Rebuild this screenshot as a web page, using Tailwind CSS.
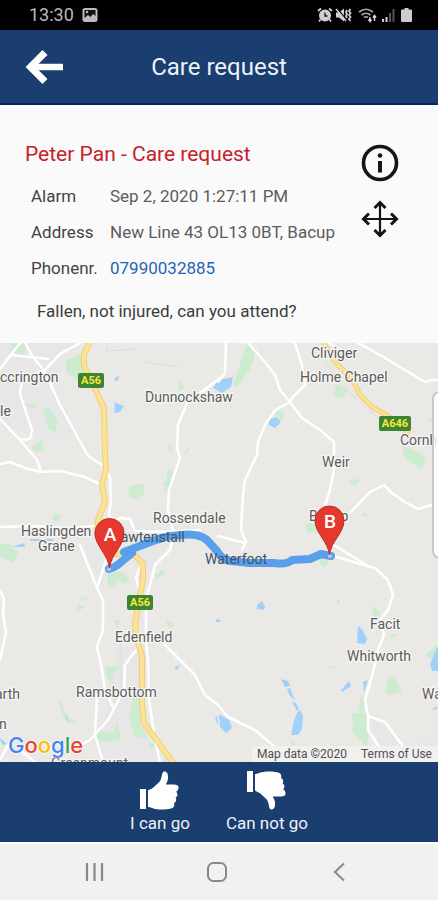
<!DOCTYPE html>
<html lang="en">
<head>
<meta charset="utf-8">
<meta name="viewport" content="width=device-width, initial-scale=1">
<title>Care request</title>
<script src="https://cdn.jsdelivr.net/npm/@tailwindcss/browser@4"></script>
</head>
<body class="flex min-h-screen flex-col bg-[#fafafa] font-['Roboto',sans-serif] text-[#444]">

<!-- Status bar -->
<div class="flex h-[30px] items-center justify-between bg-black pr-[26px] pl-[29px] text-[#b8b8b8]">
  <div class="flex items-center gap-2">
    <span class="text-lg leading-6">13:30</span>
    <svg class="size-4" viewBox="0 0 16 16"><rect x="0.5" y="1" width="15" height="14" rx="2.5" fill="#bbb"/><path d="M2.500 3h11v6l-2.500-2-2.500 3-2.500-2-3.500 3z" fill="#111"/><circle cx="5" cy="5" r="1.200" fill="#bbb"/></svg>
  </div>
  <div class="flex items-center gap-[2px]">
    <svg class="size-4" viewBox="0 0 16 16" fill="none" stroke="#d0d0d0"><circle cx="8" cy="8.500" r="5" fill="#d0d0d0" stroke-width="2"/><path d="M8 5.500v3.500h2.500" stroke="#111" stroke-width="1.300"/><path d="M1 4l3-2.500M15 4l-3-2.500M3.500 12.500l-1.500 2M12.500 12.500l1.500 2" stroke-width="1.800"/></svg>
    <svg class="h-4 w-[17px]" viewBox="0 0 17 16"><path d="M1 5.500h3l5-4v13l-5-4H1z" fill="#d0d0d0"/><path d="M2 1.500l10 12" stroke="#000" stroke-width="1.500"/><path d="M1 2l10 12" stroke="#d0d0d0" stroke-width="1.500"/><path d="M12 3l-1 2 1 2-1 2 1 2M15.500 2l-1.500 2 1.500 2-1.500 2 1.500 2-1.500 2 1.500 2" fill="none" stroke="#d0d0d0" stroke-width="1.800"/></svg>
    <svg class="ml-1 h-4 w-[19px]" viewBox="0 0 19 16" fill="none" stroke="#aaa" stroke-width="1.600"><path d="M1 5Q8 -.5 15 5M3.500 8Q8 4.500 12.500 8M6 10.500Q8 9 10 10.500"/><path d="M12 10v4M10.500 12.500l1.500 2 1.500-2M16.500 14v-5M15 10.500l1.500-2 1.500 2" stroke="#ddd" stroke-width="1.400"/></svg>
    <svg class="ml-[2px] h-4 w-[14px]" viewBox="0 0 14 16"><path d="M1 12h2v3H1zM4.500 10h2v5h-2z" fill="#ccc"/><path d="M8 6h2v9H8zM11.500 2h2v13h-2z" fill="#555"/></svg>
    <svg class="ml-1 h-4 w-[11px]" viewBox="0 0 11 16"><path d="M3.500 1h4v1.500H10a1 1 0 0 1 1 1V14a1 1 0 0 1-1 1H1a1 1 0 0 1-1-1V3.500a1 1 0 0 1 1-1h2.500z" fill="#ccc"/></svg>
  </div>
</div>

<!-- App header -->
<header class="grid h-[75px] grid-cols-[64px_1fr_64px] items-center border-b-2 border-[#08236b] bg-[#1a3e70] text-white">
  <button type="button" aria-label="Back" class="flex justify-end">
    <svg class="h-9 w-[39px]" viewBox="0 0 39 36" fill="none" stroke="#fff"><path d="M38 18H6" stroke-width="6.500"/><path d="M20 3.500L5.500 18 20 32.500" stroke-width="7"/></svg>
  </button>
  <h1 class="text-center text-2xl text-[#eef2f8]">Care request</h1>
</header>

<!-- Request details -->
<section class="flex justify-between pt-[35px] pb-5 pl-[25px]">
  <div>
    <h2 class="text-[21px] leading-7 text-[#c6202c]">Peter Pan - Care request</h2>
    <dl class="grid grid-cols-[79px_auto] pt-[10px] pl-[6px] text-[17px] leading-9 text-[#5c5c5c]">
      <dt class="text-[#444]">Alarm</dt><dd>Sep 2, 2020 1:27:11 PM</dd>
      <dt class="text-[#444]">Address</dt><dd>New Line 43 OL13 0BT, Bacup</dd>
      <dt class="text-[#444]">Phonenr.</dt><dd><a href="tel:07990032885" class="text-[#2465b5]">07990032885</a></dd>
    </dl>
    <p class="pt-[13px] pl-3 text-[17px] leading-6 text-[#3c3c3c]">Fallen, not injured, can you attend?</p>
  </div>
  <div class="flex flex-col gap-[18px] pt-1 pr-[39px]">
    <button type="button" aria-label="Information">
      <svg class="size-[38px]" viewBox="0 0 38 38"><circle cx="19" cy="19" r="16.500" fill="none" stroke="#151515" stroke-width="3.600"/><circle cx="19" cy="11.500" r="2.300" fill="#151515"/><rect x="17" y="17" width="4" height="11.500" fill="#151515"/></svg>
    </button>
    <button type="button" aria-label="Move">
      <svg class="size-[38px]" viewBox="0 0 38 38" fill="none" stroke="#151510" stroke-width="3"><path d="M19 2v34M2 19h34" stroke-width="2.200"/><path d="M13.500 8L19 2.500 24.500 8M13.500 30L19 35.500l5.500-5.500M8 13.500L2.500 19 8 24.500M30 13.500l5.500 5.500-5.500 5.500"/></svg>
    </button>
  </div>
</section>

<!-- Map -->
<main class="relative min-h-[419px] flex-1 overflow-hidden bg-[#eae9e5]">
  <svg class="absolute inset-0 size-full" viewBox="0 343 438 419" preserveAspectRatio="xMidYMid slice" font-family="Roboto, sans-serif" role="img" aria-label="Route from A to B">
    <rect y="343" width="438" height="419" fill="#eae9e5"/>
    <!-- towns -->
    <g fill="#e7e7e7">
      <path d="M0 343h78l-20 30 15 60-20 10-53-20zM98 510l34 5 5 25-5 20 12 30 8-20 20-30-10-18M78 530l25 60 6-30zM118 645l22 5v80l30 32h-60l-20-25 20-40zM370 715l35 30 33-10v27h-55z"/>
    </g>
    <!-- parks and woods -->
    <g fill="#ccebcf">
      <path d="M12 343h15l-3 12-14 1zM66 360l15-7 3 22-7 5-11-8zM24 403l15 3-8 3zM42 406l8 3 8 14-3 9-7-4-4-14zM34 444l9-4v9l-6 4-5-4zM168 445l5 4v4l-5-3zM180 380l5 9-7 2zM186 450l5-2-8 9zM168 470l5 2-3 18h-5zM136 485l8-1-1 6h-6zM130 486l14-2v10l-10 6-6-5z"/>
      <path d="M247 343l8 10-5 16-12 18-5-2 6-18zM336 384l12 5-6 9-8-3zM276 410l8 2-2 10-5-3zM402 445l18 8 6 8-5 8-16-10zM351 480l8 2-5 4-5-3zM425 417l13 4-4 4zM354 478l6 3-9 3z"/>
      <path d="M0 543l10 2 8 8-5 10-13-6zM53 513l8 3-2 6-6-2zM108 574l12-3 9 6-3 7-8-2-5 6-6-4zM80 598l12-2-10 5zM78 604l6 3-7 6zM306 523l10 1 3 8-12 1zM320 558l9 2-4 8-5-4zM363 512l6 3-6 2zM155 575l7-5 3 3-8 7zM372 605l8 8-6 6zM163 482h5l-2 12z"/>
      <path d="M114 620h6l-3 10zM105 667l14-1-6 8 1 12-7-8zM98 730l16 3 3-12 4 18-11 3-15-2zM134 690l8 15-2 20 9 14-14-3-6-18zM58 700l4 4 5 12 12 8-14-3zM148 741l8 4-6 5zM165 620l10 4-5 5zM388 676l7 1 7 14-13 4-3-3zM352 713l15 2 2 12-2 20-14-14zM388 635l11-1-8 4zM425 655l12-10v18zM290 740l6 3-3 4zM360 697l5 2-2 16h-4z"/>
    </g>
    <!-- water -->
    <g fill="#9fd1fb">
      <path d="M114 380l4-5 1 4-3 2zM114 402l10 4-4 6-6 1 1-6zM213 388l5-8 15-3-2 10-9 6zM268 420l8-3 5 5-6 6-6-3zM12 547l12-4 1 4zM30 539h23v2H30zM257 605l5-4 3 6-1 3-7-1zM337 602l2-2v3zM358 626l4 3 5 10-2 5-8-1zM341 690l8-9 2 5-9 6zM281 679l7 2 2 5-5 1zM287 689l3-1 5 12-5-4zM292 702l4 1 3 6-2 2zM300 710l3 6-1 13-4 6h-7l3-14 3-8zM219 714l10 6 3 8-6 5-6-6zM430 664l8-18v25h-6zM217 715l-2 5 3 5zM174 667l6-2-3 5zM66 715l4 9-4-6zM0 738l7 6-5 1zM363 682l5-2-4 12zM216 619l4 1v2h-4zM432 710l5-4v3z"/>
    </g>
    <!-- railway and minor roads -->
    <path d="M320 350l10 18 20 25 28 25M108 343l-2 8 30-2M145 362l34 5M121 640v50M328 667h10" fill="none" stroke="#dddddb" stroke-width="1"/>
    <!-- local roads -->
    <g fill="none" stroke="#fff" stroke-width="2.500" stroke-linejoin="round" stroke-linecap="round">
      <path d="M20 343L3 365l-3 4M25 343l8 14 12 15 15 33 28 51 16 10 6 12 1 22-2 15 8 10M80 343l-20 11-15 16-23 10-2 14 12 36-2 9-10 1-20-21M20 440l17 20 4 12M0 464l10-2 15 6 16 4 19-1 25 6 15 7M12 355l36 4"/>
      <path d="M220 378l-33 25-9 22-1 23 3 10-11 32-1 20 6 25-4 15-15 15-5 20-4 15v40l2 20 1 40 6 40 5 22M226 343l-1 30-7 9M248 343l17 19 10 13 5 15 10 12 12 16 18 12 14 12v28l-4 20-5 15M295 343l7 22 3 20-12 12-3 5-15 8-10 15-7 17-1 13-12 25-2 15-2 35 5 12-4 8M358 343l22 12 45 27 7-2h6M330 343l10 8"/>
      <path d="M218 536l27 7M350 513l20-21 14-7 8 8 13 9 13 7 14-4M334 556l26 8 15 4 13 12 5 15-5 15-8 10 4 15-6 15-5 22-8 28 3 16v14l10 15 7 17M368 716l17 6 17 23M334 545l16 10 18 11"/>
      <path d="M0 527l30-1 40 2 38-3 12-7 10 1 5 12 35 1 30-2M80 545l17 43 6 12v30l-6 17 5 23 3 20 8 17M97 588l6-18 3-10M0 590l4 10-1 15 3 17-6 28M141 565l-5 12 4 16M136 650l-11 15-1 25-16 30-18 20-15 8M97 695l-2 40 8 27M165 645l20 20 10 10 10 20 13 10 10 12 27 13 20 17M0 760l12-22M20 750l15 12"/>
    </g>
    <!-- trunk roads -->
    <g fill="none" stroke-linejoin="round" stroke-linecap="round">
      <path d="M91 340L84 354V366L91 380 104 408 105 455 106 470 102 484 105 502 98 520 97 535 108 552 122 555 136 556 143 564V580L138 606 135 625 137 640 142 656V704L144 723 155 738 174 764" stroke="#efcf7b" stroke-width="6"/>
      <path d="M91 340L84 354V366L91 380 104 408 105 455 106 470 102 484 105 502 98 520 97 535 108 552 122 555 136 556 143 564V580L138 606 135 625 137 640 142 656V704L144 723 155 738 174 764" stroke="#fce294" stroke-width="4"/>
      <path d="M322 340L335 362 352 379 360 395 372 407 388 416 408 432" stroke="#efcf7b" stroke-width="5"/>
      <path d="M322 340L335 362 352 379 360 395 372 407 388 416 408 432" stroke="#fce294" stroke-width="3"/>
    </g>
    <!-- road shields -->
    <g fill="#3d8535" font-size="11" font-weight="700" text-anchor="middle">
      <rect x="78" y="373" width="26" height="15" rx="2"/><rect x="127" y="595" width="26" height="15" rx="2"/><rect x="379" y="416" width="32" height="15" rx="2"/>
      <g fill="#f5e93a"><text x="91" y="384">A56</text><text x="140" y="606">A56</text><text x="395" y="427">A646</text></g>
    </g>
    <!-- place names -->
    <g fill="#5b5b5b" stroke="#f7f6f4" stroke-width="2.500" stroke-linejoin="round" paint-order="stroke" font-size="14">
      <text x="0" y="382">ccrington</text><text x="0" y="416">le</text>
      <text x="145" y="402">Dunnockshaw</text>
      <text x="311" y="358">Cliviger</text><text x="300" y="382">Holme Chapel</text>
      <text x="400" y="445">Cornholme</text><text x="322" y="467">Weir</text>
      <text x="153" y="523">Rossendale</text><text x="21" y="536">Haslingden</text><text x="38" y="551">Grane</text>
      <text x="309" y="521">Bacup</text>
      <text x="370" y="629">Facit</text><text x="347" y="661">Whitworth</text><text x="422" y="699">Wardle</text>
      <text x="115" y="642">Edenfield</text><text x="76" y="697">Ramsbottom</text>
      <text x="-5" y="699">arth</text><text x="-1" y="729">n</text><text x="51" y="768">Greenmount</text>
    </g>
    <!-- route -->
    <path d="M109 569Q116 567 120 563L132 553 124 552 145 544Q160 538 170 536L182 535Q198 533 207 540L217 551Q222 560 230 561L250 563 274 563Q287 565 292 560L310 559 321 554 331 556" fill="none" stroke="#5a9fec" stroke-width="8" stroke-linecap="round" stroke-linejoin="round"/>
    <g fill="#40526b" font-size="14"><text x="112" y="542">Rawtenstall</text><text x="205" y="564">Waterfoot</text></g>
    <circle cx="109" cy="569" r="2" fill="#a8cff8"/><circle cx="330" cy="556" r="2" fill="#a8cff8"/>
    <!-- pins -->
    <g fill="#e5392f" stroke="#bd2a23" stroke-width="1">
      <path d="M109.500 568C108 554 95 546 95 533a14.500 14.500 0 0 1 29 0c0 13-13 21-14.500 35z"/>
      <path d="M329.500 555C328 541 315 533 315 520.500a14.500 14.500 0 0 1 29 0c0 12.500-13 20.500-14.500 34.500z"/>
    </g>
    <g fill="#fff" font-size="19" font-weight="500" text-anchor="middle"><text x="110" y="541">A</text><text x="330" y="528">B</text></g>
  </svg>

  <!-- edge handle -->
  <div class="absolute top-12 -right-3 h-[168px] w-[18px] rounded-lg border-2 border-[#c9c9c9] bg-white/80"></div>

  <!-- map credits -->
  <div class="absolute inset-x-0 bottom-0 flex items-end justify-between">
    <a href="#" aria-label="Google" class="pb-[5px] pl-2 font-['Inter',sans-serif] text-[22px] leading-6 font-medium [text-shadow:0_0_2px_#fff,0_0_2px_#fff]"><span class="text-[#4285f4]">G</span><span class="text-[#ea4335]">o</span><span class="text-[#fbbc05]">o</span><span class="text-[#4285f4]">g</span><span class="text-[#34a853]">l</span><span class="text-[#ea4335]">e</span></a>
    <div class="flex gap-[14px] bg-[#f3f2f0]/80 pr-[6px] pl-[5px] text-xs leading-4 text-[#505050]">
      <span>Map data ©2020</span><a href="#">Terms of Use</a>
    </div>
  </div>
</main>

<!-- Response actions -->
<div class="flex h-20 justify-center gap-9 bg-[#1a3e70] text-[17px] leading-6 text-[#eef2f8]">
  <button type="button" class="flex flex-col items-center pt-[9px]">
    <svg class="h-10 w-[39px]" viewBox="0 0 39 40" fill="#fff"><path d="M0 18h6v20H0z"/><path d="M8 19.500c2-1.500 5-2 7-4.500 3-3 5-4 6-7 1-3 1-7 3-7.500 3-.5 4.500 3 4 7 0 3-2 4-2 6h8c4 0 5.500 2 4 5-.5 1.500-1 2-2 2 2 2 2 5-.5 6 1.500 2 .5 5-1.500 5.500 1 3-.5 5-3 5.500-6 1.500-14 1.500-19-.5-2-.8-3-1-4-1z"/></svg>
    <span>I can go</span>
  </button>
  <button type="button" class="flex flex-col items-center pt-[9px]">
    <svg class="h-10 w-[39px]" viewBox="0 0 39 40" fill="#fff"><path d="M0 0h6v21H0z"/><g transform="matrix(1 0 0 -1 0 39)"><path d="M8 19.500c2-1.500 5-2 7-4.500 3-3 5-4 6-7 1-3 1-7 3-7.500 3-.5 4.500 3 4 7 0 3-2 4-2 6h8c4 0 5.500 2 4 5-.5 1.500-1 2-2 2 2 2 2 5-.5 6 1.500 2 .5 5-1.500 5.500 1 3-.5 5-3 5.500-6 1.500-14 1.500-19-.5-2-.8-3-1-4-1z"/></g></svg>
    <span>Can not go</span>
  </button>
</div>

<!-- System navigation -->
<nav class="flex h-[58px] items-center justify-center gap-[102px] border-t-2 border-white bg-[#f1f1f1] pr-1">
  <button type="button" aria-label="Recent apps"><svg class="size-5" viewBox="0 0 20 20"><path d="M2 1v18M9.500 1v18M17 1v18" stroke="#888" stroke-width="2.200"/></svg></button>
  <button type="button" aria-label="Home"><svg class="size-5" viewBox="0 0 20 20"><rect x="1" y="1" width="18" height="18" rx="5.500" fill="none" stroke="#888" stroke-width="2"/></svg></button>
  <button type="button" aria-label="Back to previous app"><svg class="size-5" viewBox="0 0 20 20"><path d="M15 1.500L6 10l9 8.500" fill="none" stroke="#888" stroke-width="2"/></svg></button>
</nav>
</body>
</html>
